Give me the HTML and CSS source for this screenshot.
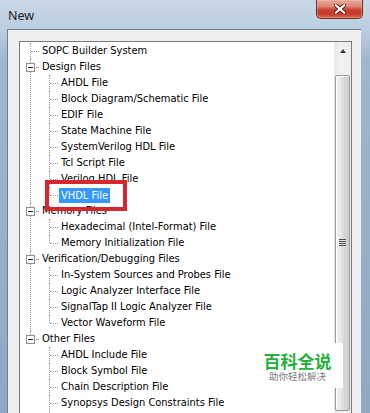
FILE: index.html
```html
<!DOCTYPE html>
<html>
<head>
<meta charset="utf-8">
<title>New</title>
<link rel="stylesheet" href="styles.css">
</head>
<body>
<div class="window">
  <div class="titlebar">
    <span class="title">New</span>
    <div class="close">
      <svg width="12" height="10" viewBox="0 0 12 10">
        <path d="M2 1.5 L10 8.5 M10 1.5 L2 8.5" stroke="#5a1a12" stroke-width="4" stroke-linecap="square"/>
        <path d="M2 1.5 L10 8.5 M10 1.5 L2 8.5" stroke="#ffffff" stroke-width="2.2" stroke-linecap="square"/>
      </svg>
    </div>
  </div>
  <div class="client">
    <div class="treebox">
      <div class="treeview">
        <ul class="tree">
          <li><div class="row"><span class="label">SOPC Builder System</span></div></li>
          <li><div class="row"><span class="exp"></span><span class="label">Design Files</span></div>
            <ul class="tree sub">
              <li><div class="row"><span class="label">AHDL File</span></div></li>
              <li><div class="row"><span class="label">Block Diagram/Schematic File</span></div></li>
              <li><div class="row"><span class="label">EDIF File</span></div></li>
              <li><div class="row"><span class="label">State Machine File</span></div></li>
              <li><div class="row"><span class="label">SystemVerilog HDL File</span></div></li>
              <li><div class="row"><span class="label">Tcl Script File</span></div></li>
              <li><div class="row"><span class="label">Verilog HDL File</span></div></li>
              <li><div class="row"><span class="label selected">VHDL File</span><span class="mark"></span></div></li>
            </ul>
          </li>
          <li><div class="row"><span class="exp"></span><span class="label">Memory Files</span></div>
            <ul class="tree sub">
              <li><div class="row"><span class="label">Hexadecimal (Intel-Format) File</span></div></li>
              <li><div class="row"><span class="label">Memory Initialization File</span></div></li>
            </ul>
          </li>
          <li><div class="row"><span class="exp"></span><span class="label">Verification/Debugging Files</span></div>
            <ul class="tree sub">
              <li><div class="row"><span class="label">In-System Sources and Probes File</span></div></li>
              <li><div class="row"><span class="label">Logic Analyzer Interface File</span></div></li>
              <li><div class="row"><span class="label">SignalTap II Logic Analyzer File</span></div></li>
              <li><div class="row"><span class="label">Vector Waveform File</span></div></li>
            </ul>
          </li>
          <li><div class="row"><span class="exp"></span><span class="label">Other Files</span></div>
            <ul class="tree sub more">
              <li><div class="row"><span class="label">AHDL Include File</span></div></li>
              <li><div class="row"><span class="label">Block Symbol File</span></div></li>
              <li><div class="row"><span class="label">Chain Description File</span></div></li>
              <li><div class="row"><span class="label">Synopsys Design Constraints File</span></div></li>
            </ul>
          </li>
        </ul>
      </div>
      <div class="scrollbar">
        <div class="sb-up"><span class="arrow"></span></div>
        <div class="sb-thumb"><span class="grip"></span></div>
      </div>
    </div>
  </div>
  <div class="watermark">
    <div class="wm-main">百科全说</div>
    <div class="wm-sub">助你轻松解决</div>
  </div>
</div>
</body>
</html>
```
FILE: styles.css
```css
html, body {
  margin: 0;
  padding: 0;
  width: 370px;
  height: 413px;
  overflow: hidden;
}

.window {
  position: relative;
  width: 370px;
  height: 413px;
  overflow: hidden;
  background: linear-gradient(to bottom, #c9d8e8 0px, #bccee2 29px, #9fb6cf 60px, #8fa8c3 413px);
}

.titlebar {
  height: 29px;
  position: relative;
  display: flex;
  align-items: center;
}

.title {
  font-family: "Noto Sans", "Open Sans", sans-serif;
  font-size: 12.5px;
  color: #1b1b1b;
  padding-left: 8px;
  padding-top: 1px;
}

.close {
  position: absolute;
  right: 7px;
  top: 0;
  width: 45px;
  height: 18px;
  border: 1px solid #6e3128;
  border-top: none;
  border-radius: 0 0 5px 5px;
  background: linear-gradient(to bottom, #e7a99d 0%, #dc8573 35%, #c8402f 55%, #c63a2a 75%, #d8644f 100%);
  box-shadow: inset 0 0 0 1px rgba(255, 200, 190, 0.35);
  display: flex;
  align-items: center;
  justify-content: center;
}

.client {
  margin-left: 7px;
  width: 354px;
  height: 384px;
  border-left: 1px solid #6f7e8e;
  border-top: 1px solid #6f7e8e;
  background: #f0f0f0;
  padding: 11px 10px 0 11px;
  box-sizing: border-box;
}

.treebox {
  width: 333px;
  height: 400px;
  box-sizing: border-box;
  border: 1px solid #7a7a7a;
  background: #ffffff;
  display: flex;
}

.treeview {
  flex: 1;
  overflow: hidden;
  padding-top: 1px;
  font-family: "DejaVu Sans Condensed", "DejaVu Sans", sans-serif;
  font-stretch: condensed;
  font-size: 11px;
  color: #000000;
}

.tree {
  list-style: none;
  margin: 0;
  padding: 0;
}

.tree.sub {
  margin-left: -1px;
}

.tree li {
  position: relative;
  padding-left: 20px;
}

.tree li::before {
  content: "";
  position: absolute;
  left: 10px;
  top: 0;
  bottom: 0;
  border-left: 1px dotted #9a9a9a;
}

.tree li:last-child::before {
  bottom: auto;
  height: 8px;
}

.tree.more li:last-child::before {
  bottom: -20px;
  height: auto;
}

.row {
  position: relative;
  height: 16px;
  display: flex;
  align-items: center;
}

.row::before {
  content: "";
  position: absolute;
  left: -9px;
  width: 8px;
  top: 8px;
  border-top: 1px dotted #9a9a9a;
}

.label {
  padding: 0 2px;
  line-height: 16px;
  height: 16px;
  white-space: nowrap;
}

.label.selected {
  background: #3399ff;
  color: #ffffff;
  height: 15px;
  line-height: 15px;
  margin-top: 1px;
}

.exp {
  position: absolute;
  left: -14px;
  top: 4px;
  width: 9px;
  height: 9px;
  box-sizing: border-box;
  border: 1px solid #8e8e8e;
  background: #ffffff;
  z-index: 1;
}

.exp::after {
  content: "";
  position: absolute;
  left: 1px;
  top: 3px;
  width: 5px;
  height: 1px;
  background: #1a1a1a;
}

.mark {
  position: absolute;
  left: -14px;
  top: -7px;
  width: 74px;
  height: 23px;
  border: 4px solid #d6262e;
  z-index: 2;
}

.scrollbar {
  width: 17px;
  background: linear-gradient(to right, #e6e6e6, #f2f2f2 40%, #ececec);
  display: flex;
  flex-direction: column;
}

.sb-up {
  height: 17px;
  display: flex;
  align-items: center;
  justify-content: center;
}

.arrow {
  width: 0;
  height: 0;
  border-left: 3.5px solid transparent;
  border-right: 3.5px solid transparent;
  border-bottom: 4px solid #3c3c3c;
}

.sb-thumb {
  margin: 16px 1px 0 1px;
  height: 336px;
  box-sizing: border-box;
  border: 1px solid #9a9a9a;
  border-radius: 2px;
  background: linear-gradient(to right, #f4f4f4 0%, #e8e8e8 35%, #d6d6d6 65%, #cfcfcf 100%);
  box-shadow: inset 1px 1px 0 #ffffff;
  display: flex;
  align-items: center;
  justify-content: center;
}

.grip {
  width: 7px;
  height: 8px;
  background: repeating-linear-gradient(to bottom, #4e4e4e 0px, #4e4e4e 1px, #e0e0e0 1px, #e0e0e0 2px);
}

.watermark {
  position: absolute;
  left: 252px;
  top: 343px;
  width: 91px;
  height: 45px;
  background: #ffffff;
  display: flex;
  flex-direction: column;
  align-items: center;
  justify-content: center;
  gap: 0px;
}

.wm-main {
  font-family: "Noto Sans CJK SC", sans-serif;
  font-weight: 700;
  font-size: 17px;
  line-height: 19px;
  color: #25b03c;
  margin-top: 2px;
}

.wm-sub {
  font-family: "Noto Sans CJK SC", sans-serif;
  font-size: 9.5px;
  line-height: 12px;
  color: #7c7c7c;
}
```
